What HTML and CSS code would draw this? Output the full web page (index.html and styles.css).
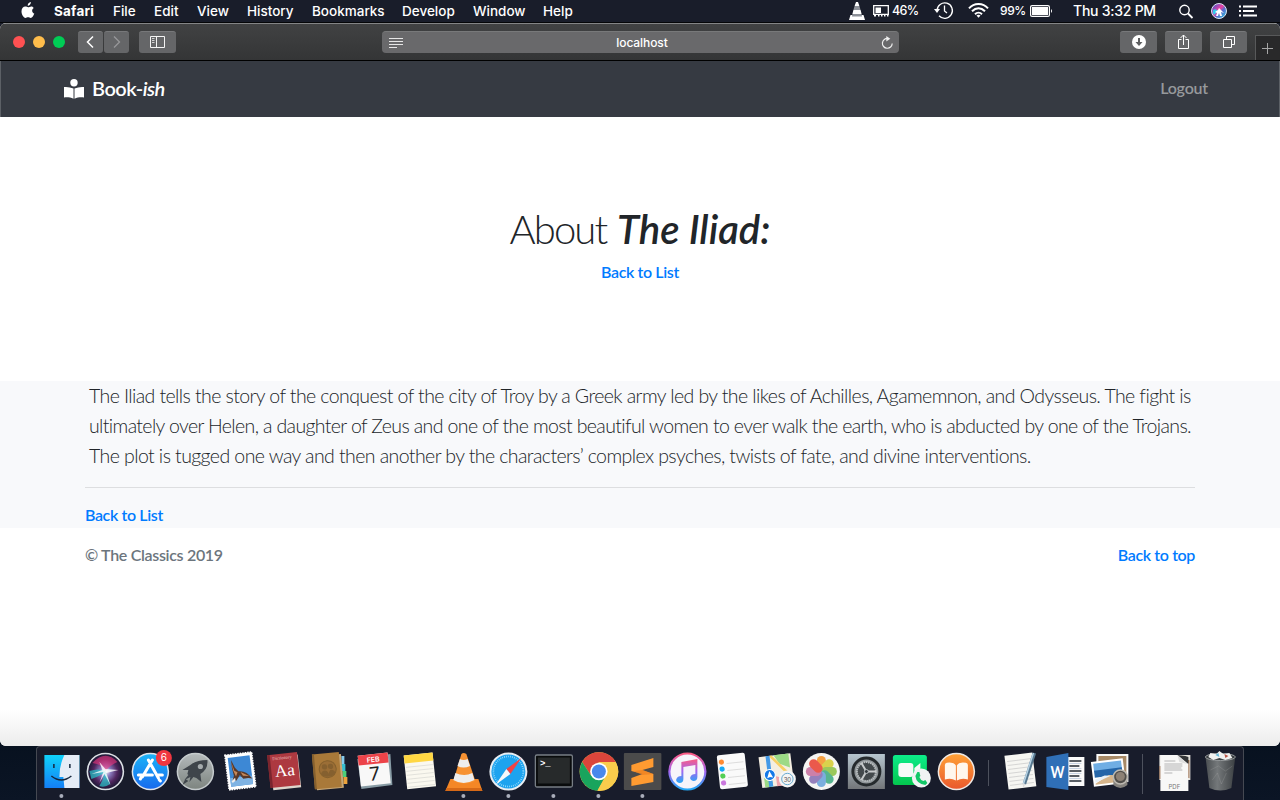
FILE: index.html
```html
<!DOCTYPE html>
<html lang="en">
<head>
<meta charset="utf-8">
<title>Book-ish</title>
<link rel="stylesheet" href="styles.css">
</head>
<body>
<div class="desktop">
  <header class="menubar">
    <svg class="apple" width="14" height="18" viewBox="0 0 14 18"><path fill="#fff" d="M9.9 0c.2 1.7-1.3 3.8-3.2 3.8C6.500 2 8 .3 9.900 0ZM12.700 5.900c-2.300 1.500-1.900 4.600.600 5.700-.7 2.100-2 4.300-3.600 4.300-1 0-1.400-.6-2.600-.6s-1.700.6-2.600.6C2.500 15.900.500 12.500.500 9.300.500 6.300 2.300 4.500 4.300 4.500c1.200 0 2 .7 2.900.7.800 0 1.800-.8 3.200-.8 1 0 1.800.6 2.300 1.500Z"/></svg>
    <nav class="menus"><b class="m-safari">Safari</b><span>File</span><span>Edit</span><span>View</span><span>History</span><span>Bookmarks</span><span>Develop</span><span>Window</span><span>Help</span></nav>
    <div class="status">
      <svg width="16" height="20" viewBox="0 0 16 20"><path fill="#fff" d="M7 2h2l1.400 4H5.600ZM4.400 10h7.200l1 4H3.400ZM1.500 15h13l1.500 5H0Z"/><path fill="#8d9199" d="M5.600 6h4.800l1.200 4H4.400ZM3.400 14h9.200l.4 2.500H3Z"/></svg>
      <svg width="17" height="20" viewBox="0 0 17 20"><path fill="none" stroke="#fff" stroke-width="1.300" d="M.7 15V5.600h14.600V15M1 14.400h14"/><path fill="#fff" d="M2.500 7.500H8V13H2.500ZM1 14h2v2.500H1zm4 0h1.500v2.500H5zm3 0h1.500v2.500H8zm3 0h1.500v2.500H11zm3 0h1.500v2.500H14z"/></svg>
      <span class="small">46%</span>
      <svg width="20" height="20" viewBox="0 0 20 20"><path fill="none" stroke="#fff" stroke-width="1.300" d="M3 10.500A7.700 7.700 0 1 1 5 15.800"/><path fill="none" stroke="#fff" stroke-width="1.300" d="M10.500 5.500V11l2.500 2"/><path fill="#fff" d="M0 9h6l-3 4z"/></svg>
      <svg width="21" height="20" viewBox="0 0 21 20"><g fill="none" stroke="#fff" stroke-width="2"><path d="M1 8.300C6 2.500 15 2.500 20 8.300M4 11.300c4-4.100 9-4.100 13 0M7 14.200c2-2 5-2 7 0"/></g><path fill="#fff" d="M8.500 15.500q2-1.600 4 0l-2 2.300z"/></svg>
      <span class="small pct">99%</span>
      <svg width="24" height="20" viewBox="0 0 24 20"><rect x=".6" y="5.600" width="18.800" height="10.800" rx="1.500" fill="none" stroke="#fff" stroke-width="1.200"/><path fill="#fff" d="M2 7h16v8H2zM21 9q2 2 0 4z"/></svg>
      <span class="clock">Thu 3:32 PM</span>
      <svg width="16" height="20" viewBox="0 0 16 20"><circle cx="6.500" cy="10" r="4.700" fill="none" stroke="#fff" stroke-width="1.400"/><path stroke="#fff" stroke-width="1.800" d="m10 13.500 4.500 4.500"/></svg>
      <svg width="16" height="20" viewBox="0 0 16 20"><defs><linearGradient id="ms" x2="1" y2="1"><stop stop-color="#2459d8"/><stop offset=".45" stop-color="#ed3fa0"/><stop offset=".6" stop-color="#5968c9"/><stop offset="1" stop-color="#26d7e4"/></linearGradient></defs><circle cx="8" cy="11" r="7.500" fill="url(#ms)" stroke="#dce4f4"/><path fill="#35c9ee" d="M2 10q3-2 5 1l-4 4q-2-2-1-5Z"/><path fill="#fff" d="m8 8 2 2 3 3-3-1 1 4H9l-1-3-1 3H5l1-3-2-1 3-2z"/></svg>
      <svg width="18" height="20" viewBox="0 0 18 20"><path stroke="#fff" stroke-width="2" d="M0 6.500h2m2 0h14M0 11h2m2 0h11M0 15.500h2m2 0h14"/></svg>
    </div>
  </header>

  <main class="window">
    <div class="toolbar">
      <div class="lights"><i class="red"></i><i class="amber"></i><i class="green"></i></div>
      <div class="navbtns">
        <span class="btn"><svg width="25" height="22" viewBox="0 0 25 22"><path d="m15 5.500-5.500 5.500 5.500 5.500" fill="none" stroke="#fff" stroke-width="1.500"/></svg></span>
        <span class="btn"><svg width="25" height="22" viewBox="0 0 25 22"><path d="m10 5.500 5.500 5.500-5.500 5.500" fill="none" stroke="#98989a" stroke-width="1.300"/></svg></span>
      </div>
      <span class="btn wide"><svg width="37" height="22" viewBox="0 0 37 22"><path d="M11.500 5.500h14v11h-14zM17.500 5.500v11" fill="none" stroke="#f4f4f4"/><path d="M13 7.500h2.500m-2.500 2h2.500m-2.500 2h2.500" stroke="#d0d0d0"/></svg></span>
      <div class="address">
        <svg width="14" height="12" viewBox="0 0 14 12"><path stroke="#e6e6e6" d="M0 1.500h14M0 4.500h14M0 7.500h14M0 10.500h8"/></svg>
        <span>localhost</span>
        <svg width="12" height="14" viewBox="0 0 12 14"><path d="M7 2.500a4.900 4.900 0 1 0 4.200 5" fill="none" stroke="#eee" stroke-width="1.200"/><path d="m5.300 0 4 2.700-4 2.800z" fill="#eee"/></svg>
      </div>
      <div class="tools">
        <span class="btn wide"><svg width="37" height="22" viewBox="0 0 37 22"><circle cx="19" cy="11" r="7" fill="#fff"/><path d="M19 7v5" stroke="#5e5f61" stroke-width="2"/><path d="M15.500 11h7L19 15z" fill="#5e5f61"/></svg></span>
        <span class="btn wide"><svg width="37" height="22" viewBox="0 0 37 22"><path d="M16.500 8.500h-3v9h10v-9h-3M18.500 14V4M15.500 7l3-3 3 3" fill="none" stroke="#fff"/></svg></span>
        <span class="btn wide"><svg width="37" height="22" viewBox="0 0 37 22"><path d="M13.500 8.500h8v8h-8zM16.500 8.500v-3h8v8h-3" fill="none" stroke="#fff"/></svg></span>
      </div>
      <span class="newtab"><svg width="24" height="24" viewBox="0 0 24 24"><path d="M6 12.500h11M11.500 7v11" stroke="#a5a5a5" fill="none"/></svg></span>
    </div>

    <nav class="navbar">
      <a class="brand"><svg width="20" height="20" viewBox="0 0 20 20"><circle cx="10" cy="3.700" r="3.700" fill="#fff"/><path fill="#fff" d="M9.500 9.500v10.200C6.500 18.500 3.500 18 0 18.500V8q5-.5 9.500 1.500ZM10.500 9.500Q15 7.500 20 8v10.500c-3.500-.5-6.500 0-9.500 1.200Z"/></svg><span class="name">Book-<em>ish</em></span></a>
      <a class="logout">Logout</a>
    </nav>
    <section class="hero">
      <h1><span class="about">About</span> <em>The Iliad:</em></h1>
      <a class="link">Back to List</a>
    </section>
    <section class="story">
      <div class="container">
        <p><span class="l1">The Iliad tells the story of the conquest of the city of Troy by a Greek army led by the likes of Achilles, Agamemnon, and Odysseus. The fight is</span><span class="l2">ultimately over Helen, a daughter of Zeus and one of the most beautiful women to ever walk the earth, who is abducted by one of the Trojans.</span><span class="l3">The plot is tugged one way and then another by the characters’ complex psyches, twists of fate, and divine interventions.</span></p>
        <hr>
        <a class="link">Back to List</a>
      </div>
    </section>
    <footer class="footer"><span class="copy">© The Classics 2019</span><a class="link top">Back to top</a></footer>
    <div class="fade"></div>
  </main>

  <div class="dock">
    <svg class="app" viewBox="0 0 44 54"><defs><linearGradient id="fb" x2="0" y2="1"><stop stop-color="#10d2fb"/><stop offset="1" stop-color="#147ff5"/></linearGradient></defs><path fill="url(#fb)" d="M5 9h35v33H5z"/><path fill="#e5ecf6" d="M25 9h15v33H25l-1-11h-4q0-12 5-22Z"/><path d="M14.500 18v4M30.500 18v4M12 30q10 8 20 0" fill="none" stroke="#16263c" stroke-width="1.500"/><circle class="run" cx="22" cy="50" r="2"/></svg>
    <svg class="app" viewBox="0 0 44 54"><defs><radialGradient id="si"><stop stop-color="#fff"/><stop offset=".3" stop-color="#8a79bd"/><stop offset=".65" stop-color="#50265f"/><stop offset="1" stop-color="#171630"/></radialGradient></defs><circle cx="22" cy="25.500" r="18" fill="url(#si)" stroke="#dce0e5" stroke-width="1.600"/><path fill="#ed377f" opacity=".6" d="M9 17Q22 3 34 16q-7 3-12 9-3-7-13-8Z"/><path fill="#26c6cb" opacity=".7" d="M6 25q9-3 16 0l5 13q-6 4-11 2 4-6 5-13Q14 31 8 33Z"/><path fill="#fff" d="m22 23 13 1-12 3 4 12-6-11-5 9 4-11-12 2 11-4-3-8Z" opacity=".8"/></svg>
    <svg class="app" viewBox="0 0 44 54"><defs><linearGradient id="as" x2="0" y2="1"><stop stop-color="#1cb5f8"/><stop offset="1" stop-color="#1769ed"/></linearGradient></defs><circle cx="22" cy="25.500" r="18" fill="url(#as)" stroke="#e0e5eb" stroke-width="1.500"/><path d="m20 14 10 18m-6-18L14 31M10 29h14m6 0h4M12 33l1-2m18 3 1 1" fill="none" stroke="#fff" stroke-width="3" stroke-linecap="round"/><circle cx="35.500" cy="12" r="8" fill="#f03640"/><text x="35.500" y="15.300" text-anchor="middle" fill="#fff" class="badge">6</text></svg>
    <svg class="app" viewBox="0 0 44 54"><defs><linearGradient id="ro" x2="0" y2="1"><stop stop-color="#b4babc"/><stop offset="1" stop-color="#7d847f"/></linearGradient></defs><circle cx="22" cy="25.500" r="18" fill="url(#ro)" stroke="#c5cbcd" stroke-width="1.500"/><path fill="#3f454b" d="M34 14q1 9-7 14l1 8-5-4-3-1-4 5 1-5-6 3 4-5-1-1 1-4-6 0 8-5q6-5 17-5ZM9 39l3-6 3 2z"/><circle cx="27" cy="20.500" r="2.600" fill="#a5abad"/></svg>
    <svg class="app" viewBox="0 0 44 54"><g transform="rotate(-7 22 25)"><path d="M8.500 7.500h27v35h-27z" fill="#fff" stroke="#fff" stroke-width="1.500" stroke-dasharray="1.500 1"/><path fill="#3d88d5" d="M11 10.500h22v29H11z"/><path fill="#7fb3e3" d="M11 31h22v8.500H11z"/><path fill="#58382a" d="m14 13 3 8 3 4q8 0 13 9l-4-1-5 0-3-4-4 5-4 0 2-5-1-8Z"/><path fill="#c6895a" d="m14 15 2 9 3 2-2 4-2-6ZM22 26l8 5-6-1z"/><path fill="#eee" d="m12 34 4-3v3l-3 2z"/></g></svg>
    <svg class="app" viewBox="0 0 44 54"><g transform="rotate(-6 22 25)"><path fill="#ded6cc" d="M9 10h28v33H9z"/><path fill="#ad3940" d="M6.500 7.500h30v33h-30z"/><path fill="#7b252d" d="M6.500 7.500H9v33H6.500z"/><text x="22.500" y="30" text-anchor="middle" class="dict">Aa</text><text x="21" y="13" text-anchor="middle" class="tiny">Dictionary</text></g></svg>
    <svg class="app" viewBox="0 0 44 54"><path fill="#86cbed" d="M34 10l3 0v8h-3z"/><path fill="#36bfd0" d="M34 18h4v7h-4z"/><path fill="#4bcf78" d="M35 25h4v6h-4z"/><path fill="#eba33c" d="M36 31h4v7h-4z"/><g transform="rotate(-5 22 25)"><path fill="#c7a776" d="M8 9h27v34H8z"/><path fill="#a97939" d="M6 7h27v35H6z"/><path fill="#86602e" d="M6 7h2v35H6z"/><circle cx="20.500" cy="23" r="8.500" fill="#9b6e36" stroke="#85602d"/><circle cx="17.500" cy="20.500" r="2.700" fill="#85602f"/><circle cx="23.500" cy="20.500" r="2.700" fill="#85602f"/><path fill="#85602f" d="M13.500 27q1-3 4-3t3.500 4q1-4 3-4 3 0 4 3-2 3.500-7.500 3.500T13.500 27Z"/></g></svg>
    <svg class="app" viewBox="0 0 44 54"><path fill="#889ca5" d="m5 13 33-5 2 31-31 4z"/><g transform="rotate(-6 22 25)"><path fill="#f8f8f8" d="M7 8h30v31H7z"/><path fill="#ec4349" d="M7 8h30v10H7z"/><text x="22" y="16" text-anchor="middle" class="feb">FEB</text><text x="22" y="34.500" text-anchor="middle" class="seven">7</text></g></svg>
    <svg class="app" viewBox="0 0 44 54"><g transform="rotate(-6 22 25)"><path fill="#faf8ef" d="M8 8h29v34H8z"/><path fill="#ffd743" d="M8 8h29v8H8z"/><path stroke="#d8d8d3" stroke-width=".7" d="M9 20h27M9 24h27M9 28h27M9 32h27M9 36h27M9 40h27"/></g></svg>
    <svg class="app" viewBox="0 0 44 54"><path fill="#f48726" d="M9 33h28l4 12H4z"/><path fill="#d66917" d="m5 42-1 3h37l-1-3z"/><path fill="#f79232" d="M20 8q2-2 5 0l9 27q-11 5-22 0Z"/><path fill="#eee" d="m18.500 13-2.400 7q6 3 12.500 0l-2.300-7q-4 2-7.800 0ZM14 27l-2 7q10 6 21 0l-2-7q-8 4-17 0Z"/><circle class="run" cx="22" cy="50" r="2"/></svg>
    <svg class="app" viewBox="0 0 44 54"><circle cx="22" cy="25.500" r="18" fill="#1da3ef" stroke="#e7edf2" stroke-width="2"/><circle cx="22" cy="25.500" r="15" fill="none" stroke="#a7e4ff" stroke-dasharray=".7 1.300" stroke-width="1.700"/><path fill="#f14345" d="m35 12-15 11 4 5z"/><path fill="#f5f8fa" d="M9 39 20 23l4 5z"/><circle class="run" cx="22" cy="50" r="2"/></svg>
    <svg class="app" viewBox="0 0 44 54"><rect x="4" y="9" width="37" height="32" rx="1.500" fill="#090b0c" stroke="#777e85" stroke-width="1.300"/><path fill="#272a2b" d="M6.500 11.500h32v26h-32z"/><text x="8.500" y="20" class="term">&gt;_</text><circle class="run" cx="22" cy="50" r="2"/></svg>
    <svg class="app" viewBox="0 0 44 54"><circle cx="22.500" cy="25.500" r="19.300" fill="#f9cc4c"/><path fill="#db453b" d="M5.800 16a19.300 19.300 0 0 1 33.500 0H22.500L15 30Z"/><path fill="#19a45d" d="M5.800 16 15 30l14 0-8 14.800A19.300 19.300 0 0 1 5.800 16Z"/><path fill="#f9cc4c" d="M23 16h16.300A19.300 19.300 0 0 1 21 44.800L30 30Z"/><circle cx="22.500" cy="25.500" r="8.700" fill="#fff"/><circle cx="22.500" cy="25.500" r="7" fill="#4988ec"/><circle class="run" cx="22" cy="50" r="2"/></svg>
    <svg class="app" viewBox="0 0 44 54"><rect x="3.500" y="7" width="37.500" height="37" rx="1" fill="#4b4b4b"/><path fill="#ff9b31" d="m11 19 22-7v9l-11 3 11 4v8l-22 4v-8l11-4-11-3Z"/><path fill="#e8791d" d="m13 25 9-1 11 4-11 1Z" opacity=".6"/><circle class="run" cx="22" cy="50" r="2"/></svg>
    <svg class="app" viewBox="0 0 44 54"><defs><linearGradient id="it" x2="0" y2="1"><stop stop-color="#fb5b84"/><stop offset=".5" stop-color="#a365ef"/><stop offset="1" stop-color="#24a9f7"/></linearGradient></defs><circle cx="22" cy="25.500" r="18" fill="#f6f4fa" stroke="url(#it)" stroke-width="2.200"/><path fill="url(#it)" d="m16 16 16-3v18q0 4-4 4-4-1-3-4 1-3 5-3v-9l-12 2v12q0 4-4 4-4-1-3-4 1-3 5-3Z"/></svg>
    <svg class="app" viewBox="0 0 44 54"><g transform="rotate(-6 22 25)"><rect x="8" y="8" width="28" height="34" rx="2" fill="#fafafa"/><path stroke="#ddd" d="M17 17h17M17 24h17M17 31h17M17 38h17"/><g><circle cx="12" cy="15" r="2.600" fill="#ff8a32"/><circle cx="12" cy="22" r="2.600" fill="#16a9f6"/><circle cx="12" cy="29" r="2.600" fill="#54cf55"/><circle cx="12" cy="36" r="2.600" fill="#ca78dd"/></g></g></svg>
    <svg class="app" viewBox="0 0 44 54"><g transform="rotate(-7 22 25)"><path fill="#f4eee2" d="M5 9h32v31H5z"/><path fill="#9cda86" d="M20 9h15v14L25 18ZM8 30l8 5v5H8z"/><path fill="#f7cf62" d="m18 9 19 23v5L15 9Z"/><path fill="#efa4ab" d="M20 30l13 5v5H20z"/><path fill="#4499e6" d="M12 9h4v31h-4z"/><circle cx="14" cy="28" r="5.500" fill="#157ae7" stroke="#fff"/><path fill="#fff" d="m14 24 3 7-3-1-3 1z"/></g><circle cx="32" cy="33" r="8.500" fill="#f5f5f5"/><circle cx="32" cy="33" r="5.700" fill="none" stroke="#67a9cf"/><text x="32" y="35.500" text-anchor="middle" class="thirty">30</text></svg>
    <svg class="app" viewBox="0 0 44 54"><circle cx="22" cy="25.500" r="18.500" fill="#f5f5f3"/><g opacity=".9"><rect x="17.500" y="10" width="9" height="15.500" rx="4.500" fill="#f69831"/><rect x="17.500" y="10" width="9" height="15.500" rx="4.500" fill="#d8cf3b" transform="rotate(45 22 25.500)"/><rect x="17.500" y="10" width="9" height="15.500" rx="4.500" fill="#92c44b" transform="rotate(90 22 25.500)"/><rect x="17.500" y="10" width="9" height="15.500" rx="4.500" fill="#47ae86" transform="rotate(135 22 25.500)"/><rect x="17.500" y="10" width="9" height="15.500" rx="4.500" fill="#6ea7dc" transform="rotate(180 22 25.500)"/><rect x="17.500" y="10" width="9" height="15.500" rx="4.500" fill="#8b74b7" transform="rotate(225 22 25.500)"/><rect x="17.500" y="10" width="9" height="15.500" rx="4.500" fill="#c874a2" transform="rotate(270 22 25.500)"/><rect x="17.500" y="10" width="9" height="15.500" rx="4.500" fill="#e9493b" transform="rotate(315 22 25.500)"/></g></svg>
    <svg class="app" viewBox="0 0 44 54"><defs><linearGradient id="se" x2="0" y2="1"><stop stop-color="#b6c5cf"/><stop offset="1" stop-color="#737679"/></linearGradient></defs><path fill="url(#se)" d="M3.500 8h37v35h-37z"/><circle cx="22" cy="25.500" r="13.500" fill="#909699" stroke="#252a2d" stroke-width="3"/><circle cx="22" cy="25.500" r="9.500" fill="#43494c" stroke="#b8bdbf" stroke-width="2" stroke-dasharray="1.500 .7"/><path d="M22 25.500 17 17m5 8.500-5 8.500m5-8.500h10" stroke="#c7cacb" stroke-width="2"/><circle cx="22" cy="25.500" r="2" fill="#343b3f" stroke="#bbc0c2"/></svg>
    <svg class="app" viewBox="0 0 44 54"><defs><linearGradient id="ft" x2="0" y2="1"><stop stop-color="#0cec8a"/><stop offset="1" stop-color="#04c64e"/></linearGradient></defs><rect x="3.500" y="9" width="34" height="30" rx="2.500" fill="url(#ft)"/><rect x="9" y="17" width="15" height="14" rx="3" fill="#f5faf7"/><path fill="#f5faf7" d="m25 22 6-5v15l-6-5z"/><circle cx="32" cy="32" r="9.500" fill="#f0f3f3"/><path fill="#13c868" d="m28 26 2 0 1 4-1 1q1 3 4 4l2-1 2 3-2 2q-9-1-10-9Z"/></svg>
    <svg class="app" viewBox="0 0 44 54"><defs><linearGradient id="ib" x2="0" y2="1"><stop stop-color="#ffa237"/><stop offset="1" stop-color="#e9582c"/></linearGradient></defs><circle cx="22" cy="25.500" r="18" fill="url(#ib)" stroke="#eee9e4" stroke-width="1.500"/><path fill="#fff7ed" d="M21.500 19.500v15q-5-3-11-1V19q0-2 2-2.300 7-1 9 2.800ZM22.500 19.500q2-4 9-2.800 2 .3 2 2.300v14.500q-6-2-11 1Z"/></svg>
    <i class="sep short"></i>
    <svg class="app" viewBox="0 0 44 54"><g transform="rotate(-7 22 25)"><path fill="#f6f6f2" d="M8 8h28v34H8z"/><path stroke="#c8c9c8" stroke-width=".7" d="M10 14h24M10 18h24M10 22h24M10 26h24M10 30h24M10 34h24M10 38h24"/></g><path stroke="#577890" stroke-width="3.500" d="M36 7 26 38"/><path stroke="#b6d2e4" stroke-width="1.500" d="M35 7 25 38"/><path fill="#ddd" d="m24 37 3 1-2 4z"/></svg>
    <svg class="app" viewBox="0 0 44 54"><path fill="#fafafa" d="M23 11h18v29H23z"/><path stroke="#242c36" stroke-width="1.300" d="M26 15h12M26 20h10M26 25h12M26 30h10M26 35h12"/><path stroke="#c9d5e5" stroke-width="1" d="M26 17.500h12M26 22.500h12M26 27.500h12M26 32.500h12"/><path fill="#2f6fb7" d="m3 11 22-4v37L3 41z"/><text x="14" y="31.500" text-anchor="middle" class="word" textLength="14" lengthAdjust="spacingAndGlyphs">W</text></svg>
    <svg class="app" viewBox="0 0 44 54"><path fill="#fafafa" d="M8 8h32v28H8z"/><path fill="#a88a67" d="M10 10h28v24H10z"/><g transform="rotate(-7 20 27)"><path fill="#fff" d="M4 14h32v25H4z"/><path fill="#70aee4" d="M6 16h28v8H6z"/><path fill="#2465a8" d="M6 23h28v7H6z"/><path fill="#d6b58b" d="m6 36 14-7 14 2v6H6z"/><path fill="#e8f1f8" d="m6 32 10-3 6 1-16 5z"/></g><path fill="#85827d" d="M25 32q7 7 14 0v7q-7 6-14 0z"/><circle cx="32" cy="31" r="7" fill="#514e4a" stroke="#bdb9b1" stroke-width="1.600"/><circle cx="32" cy="30.500" r="4.500" fill="#8d8175"/></svg>
    <i class="sep"></i>
    <svg class="app" viewBox="0 0 44 54"><path fill="#e4e2dc" d="M6 9h31v25H6z"/><path fill="#986c4b" d="M6 20h3v13H6zm27-6h3v18h-3z"/><path fill="#f8f8f7" d="M7 9h20l8 8v28H7z"/><path fill="#333537" d="m24 9 11 9V11l-3-1z"/><path fill="#dedede" d="m24 9 10 9-8-2z"/><path stroke="#999" stroke-width=".7" d="M11 15h11M11 18h18M11 20h18M11 22h17M11 24h18M11 27h8"/><text x="21" y="42.500" text-anchor="middle" class="pdf">PDF</text></svg>
    <svg class="app" viewBox="0 0 44 54"><defs><linearGradient id="tr"><stop stop-color="#4a4e51"/><stop offset=".4" stop-color="#74787a"/><stop offset="1" stop-color="#3b3f42"/></linearGradient></defs><path fill="url(#tr)" d="M7 10h30l-4 32q-11 5-22 0Z"/><ellipse cx="22" cy="11" rx="15" ry="3.500" fill="#383c40" stroke="#969a9c"/><path fill="#f1f1f0" d="m10 11 2-4 6 1 3-3 4 3 6-1 3 5-7 2-6-2-6 2z"/><path fill="#67b6d6" d="m17 9 3-2 1 4z"/><path fill="#ba5548" d="m26 8 4 2-3 2z"/><path fill="none" stroke="#adb0b0" stroke-width=".6" opacity=".4" d="m12 24 8-4 7 5 7-5M14 34l5-7 4 11 5-11"/></svg>
  </div>
</div>
</body>
</html>
```
FILE: styles.css
```css
* { box-sizing: border-box; }
body { margin: 0; font-family: Lato, sans-serif; }
.desktop { width: 1280px; height: 800px; overflow: hidden; display: flex; flex-direction: column; background: linear-gradient(#191d2a 0, #191d2a 40px, #07111f 740px, #0b1525 800px); }
svg { display: block; flex: none; }

.menubar { height: 23px; flex: none; display: flex; justify-content: space-between; padding: 0 23px 0 21px; color: #fff; font: 500 13.5px/22px Inter, sans-serif; border-bottom: 1px solid #050608; }
.apple { margin-top: 2px; }
.menus { display: grid; grid-template-columns: 59px 41px 43px 50px 65px 90px 71px 70px 40px; margin: 0 auto 0 19px; white-space: nowrap; }
.m-safari { font-weight: 700; letter-spacing: .2px; }
.status { display: grid; grid-template-columns: 24px 19px 42px 34px 32px 30px 43px 105px 33px 28px 18px; white-space: nowrap; }
.small { font-size: 12.5px; letter-spacing: -.7px; }
.pct { font-size: 12px; letter-spacing: -.4px; }
.clock { font-size: 14px; letter-spacing: -.25px; }

.window { height: 723px; flex: none; display: flex; flex-direction: column; background: #fff; border-radius: 6px; overflow: hidden; }
.toolbar { height: 38px; flex: none; display: flex; align-items: flex-start; padding-left: 13px; background: linear-gradient(#414243, #343536); border-top: 1px solid #848586; border-bottom: 1px solid #000; }
.lights { display: flex; gap: 8px; padding-top: 12px; }
.lights i { width: 12px; height: 12px; border-radius: 50%; }
.red { background: #ff5152; }
.amber { background: #ffbd4b; }
.green { background: #00cc55; }
.btn { width: 25px; height: 22px; background: #656668; border-radius: 3px; border-top: 1px solid #77787a; }
.btn svg { margin-top: -1px; }
.wide { width: 37px; }
.navbtns { display: flex; gap: 1px; margin: 7px 10px 0 13px; }
.toolbar > .wide { margin-top: 7px; }
.address { width: 517px; height: 22px; margin: 7px 0 0 206px; padding: 0 6px 0 7px; display: flex; justify-content: space-between; align-items: center; background: #69696b; border-top: 1px solid #78797a; border-radius: 4px; color: #fff; font: 500 12px Inter, sans-serif; letter-spacing: -.1px; }
.tools { display: flex; gap: 8px; margin: 7px 8px 0 221px; }
.newtab { width: 25px; height: 25px; margin-top: 11px; background: #29292a; border: 1px solid #58595a; border-width: 1px 0 0 1px; }

.navbar { height: 56px; flex: none; display: flex; justify-content: space-between; align-items: center; padding: 0 71px 0 63px; background: #363a42; border: solid #5c6066; border-width: 0 1px; }
.brand { display: flex; gap: 8px; align-items: center; color: #fff; font-size: 20px; font-weight: 600; }
.name { letter-spacing: -.5px; margin-top: -2px; }
.logout { color: #96999c; font-size: 16px; font-weight: 600; letter-spacing: -.2px; margin-top: -3px; }
.hero { height: 264px; flex: none; padding-top: 88px; display: flex; flex-direction: column; align-items: center; background: #fff; }
h1 { margin: 0; font-size: 40px; line-height: 48px; font-weight: 300; color: #212529; white-space: nowrap; }
.about { letter-spacing: -1.900px; }
h1 em { font-weight: 600; }
.link { color: #007bff; font-size: 16px; line-height: 24px; font-weight: 600; letter-spacing: -.37px; }
.hero .link { margin-top: 7px; }
.story { height: 147px; flex: none; display: flow-root; background: #f8f9fb; }
.container { width: 1110px; margin: 0 auto; }
.story p { height: 90px; margin: 0; padding-left: 4px; font-size: 19.500px; line-height: 30px; font-weight: 300; color: #212529; white-space: nowrap; }
.story p span { display: block; width: fit-content; }
.l1 { letter-spacing: -.588px; }
.l2 { letter-spacing: -.622px; }
.l3 { letter-spacing: -.577px; }
hr { margin: 16px 0 15px; border: 0; border-top: 1px solid #dddee0; }
.footer { width: 1110px; margin: 15px auto 0; display: flex; justify-content: space-between; line-height: 24px; font-size: 16px; font-weight: 600; letter-spacing: -.32px; color: #6c757d; }
.fade { height: 36px; flex: none; margin-top: auto; background: linear-gradient(#fff, #ececec); }

.dock { width: 1208px; height: 54px; flex: none; margin-left: 36px; padding-left: 1.500px; display: flex; background: #181c2b; border: 1px solid #454952; border-bottom: 0; border-radius: 4px 4px 0 0; }
.app { width: 44.750px; height: 54px; margin-top: -1px; overflow: visible; }
.run { fill: #a9adba; }
.sep { width: 1px; height: 40px; margin: 7px 9.600px; background: #4d515d; flex: none; }
.short { height: 26px; margin-top: 13px; }
.badge { font: 10px Inter, sans-serif; }
.dict { font: 17px "Liberation Serif", serif; fill: #fff; }
.tiny { font: 4.500px "Liberation Serif", serif; fill: #edc5c5; }
.feb { font: 600 7px Inter, sans-serif; fill: #fff; }
.seven { font: 19px Inter, sans-serif; fill: #222; }
.term { font: bold 9px "Liberation Mono", monospace; fill: #fff; }
.thirty { font: 6px Inter, sans-serif; fill: #555; }
.word { font: bold 17px Lato, sans-serif; fill: #fff; }
.pdf { font: 6px Inter, sans-serif; fill: #777; }
```
